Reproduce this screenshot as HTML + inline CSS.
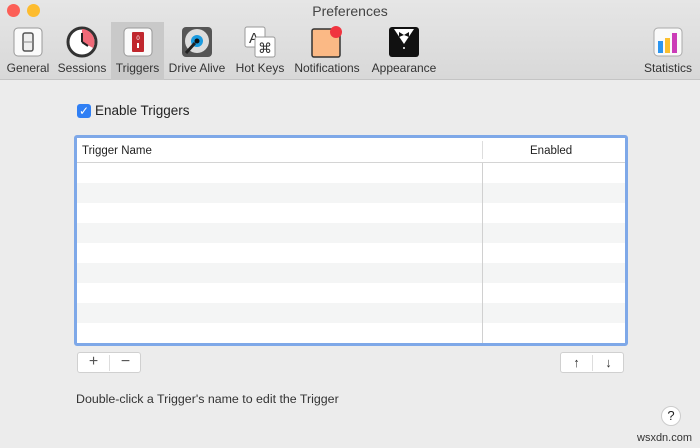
<!DOCTYPE html>
<html><head><style>
*{margin:0;padding:0;box-sizing:border-box}
body{width:700px;height:448px;overflow:hidden;background:#ececec;font-family:"Liberation Sans",sans-serif;position:relative;color:#222}
.tb{position:absolute;left:0;top:0;width:700px;height:80px;background:linear-gradient(#e6e6e6,#d8d8d8);border-bottom:1px solid #c4c4c4}
.dot{position:absolute;top:4px;width:13px;height:13px;border-radius:50%}
.title{position:absolute;top:3px;left:0;width:700px;text-align:center;font-size:14px;color:#444}
.it{position:absolute;top:22px;height:58px;text-align:center;font-size:12px;color:#333}
.it .lab{position:absolute;top:39px;left:0;right:0;white-space:nowrap}
.it svg{position:absolute;top:4px;left:50%;margin-left:-16px}
.sel{background:#c9c9c9}
.a{position:absolute}
</style></head><body>
<div class="tb">
<div class="dot" style="left:7px;background:#fc5f57"></div>
<div class="dot" style="left:27px;background:#fdbc2e"></div>
<div class="title">Preferences</div>
<div class="it" style="left:4px;width:48px"><svg width="32" height="32"><rect x="2" y="2" width="28" height="28" rx="4" fill="#fafafa" stroke="#999"/><rect x="11" y="7" width="10" height="18" rx="2" fill="#eee" stroke="#555" stroke-width="1.5"/><line x1="11" y1="16" x2="21" y2="16" stroke="#888"/></svg><div class="lab">General</div></div>
<div class="it" style="left:56px;width:52px"><svg width="32" height="32"><circle cx="16" cy="16" r="14" fill="#fff" stroke="#333" stroke-width="3"/><path d="M16 16 L16 3 A13 13 0 0 1 27 22 Z" fill="#f06a78"/><path d="M16 16 L16 7 M16 16 L22 20" stroke="#222" stroke-width="2"/></svg><div class="lab">Sessions</div></div>
<div class="it sel" style="left:111px;width:53px"><svg width="32" height="32"><rect x="2" y="2" width="28" height="28" rx="4" fill="#fafafa" stroke="#999"/><rect x="10" y="6" width="12" height="20" rx="1" fill="#c0272d"/><text x="16" y="14" font-size="6" fill="#fff" text-anchor="middle">0</text><rect x="15" y="17" width="2" height="5" fill="#fff"/></svg><div class="lab">Triggers</div></div>
<div class="it" style="left:167px;width:60px"><svg width="32" height="32"><rect x="1" y="1" width="30" height="30" rx="4" fill="#555"/><circle cx="16" cy="15" r="12" fill="#ddd"/><circle cx="16" cy="15" r="6" fill="#1b9be0"/><circle cx="16" cy="15" r="2.5" fill="#111"/><path d="M5 27 L14 17" stroke="#222" stroke-width="3"/></svg><div class="lab">Drive Alive</div></div>
<div class="it" style="left:233px;width:54px"><svg width="32" height="32"><rect x="1" y="1" width="20" height="20" rx="2" fill="#fff" stroke="#999"/><text x="5" y="17" font-size="15" fill="#333">A</text><rect x="11" y="11" width="20" height="20" rx="2" fill="#fff" stroke="#999"/><text x="21" y="27" font-size="14" fill="#333" text-anchor="middle">⌘</text></svg><div class="lab">Hot Keys</div></div>
<div class="it" style="left:292px;width:70px"><svg width="32" height="32"><rect x="1" y="3" width="28" height="28" rx="2" fill="#fbb985" stroke="#333" stroke-width="1.5"/><circle cx="25" cy="6" r="6" fill="#f0343f"/></svg><div class="lab">Notifications</div></div>
<div class="it" style="left:370px;width:68px"><svg width="32" height="32"><rect x="1" y="1" width="30" height="30" rx="3" fill="#111"/><path d="M6 3 L16 18 L26 3 Z" fill="#fff"/><path d="M11 6 L16 9 L21 6 L21 11 L16 9 L11 11Z" fill="#111"/><circle cx="16" cy="22" r="1" fill="#fff"/></svg><div class="lab">Appearance</div></div>
<div class="it" style="left:640px;width:56px"><svg width="32" height="32"><rect x="2" y="2" width="28" height="28" rx="4" fill="#fafafa" stroke="#aaa"/><rect x="6" y="15" width="5" height="12" fill="#2b95f0"/><rect x="13" y="12" width="5" height="15" fill="#fbbf2f"/><rect x="20" y="7" width="5" height="20" fill="#cb3cb7"/></svg><div class="lab">Statistics</div></div>
</div>
<div class="a" style="left:77px;top:104px;width:14px;height:14px;border-radius:3px;background:#2f7ff4;color:#fff;font-size:12px;line-height:14px;text-align:center">✓</div>
<div class="a" style="left:95px;top:103px;font-size:13.5px">Enable Triggers</div>
<div class="a" style="left:74px;top:135px;width:554px;height:211px;border:3px solid #7ea8e8;border-radius:3px;background:#fff;overflow:hidden">
<div style="height:25px;border-bottom:1px solid #d4d4d4;font-size:11.5px;position:relative;background:#fff">
<span style="position:absolute;left:5px;top:7px">Trigger Name</span>
<span style="position:absolute;left:405px;top:3px;height:18px;border-left:1px solid #ddd"></span>
<span style="position:absolute;left:453px;top:7px">Enabled</span></div>
<div style="height:180px;background:repeating-linear-gradient(#fff 0 20px,#f4f5f5 20px 40px);position:relative"><div style="position:absolute;left:405px;top:0;bottom:0;border-left:1px solid #d0d0d0"></div></div>
</div>
<div class="a" style="left:77px;top:352px;width:64px;height:21px;background:#fff;border:1px solid #d0d0d0;border-radius:3px;font-size:16px;color:#555">
<span style="position:absolute;left:0;width:31px;text-align:center;top:0">+</span><span style="position:absolute;left:31px;top:2px;height:16px;border-left:1px solid #ddd"></span><span style="position:absolute;left:32px;width:31px;text-align:center;top:0">−</span></div>
<div class="a" style="left:560px;top:352px;width:64px;height:21px;background:#fff;border:1px solid #d0d0d0;border-radius:3px;font-size:13px;color:#333">
<span style="position:absolute;left:0;width:31px;text-align:center;top:2px">↑</span><span style="position:absolute;left:31px;top:2px;height:16px;border-left:1px solid #ddd"></span><span style="position:absolute;left:32px;width:31px;text-align:center;top:2px">↓</span></div>
<div class="a" style="left:76px;top:392px;font-size:12.4px;color:#333">Double-click a Trigger's name to edit the Trigger</div>
<div class="a" style="left:661px;top:406px;width:20px;height:20px;border-radius:50%;background:#fff;border:1px solid #ccc;font-size:13px;text-align:center;line-height:18px">?</div>
<div class="a" style="left:637px;top:432px;font-size:11px;color:#333">wsxdn.com</div>
</body></html>
